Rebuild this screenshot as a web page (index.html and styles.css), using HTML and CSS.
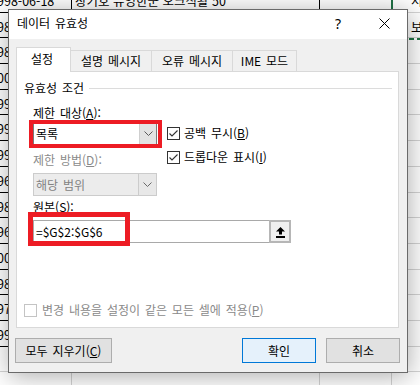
FILE: index.html
```html
<!DOCTYPE html>
<html lang="ko">
<head>
<meta charset="utf-8">
<title>데이터 유효성</title>
<link rel="stylesheet" href="styles.css">
</head>
<body>
<div class="sheet">
  <div class="row tbl"><div class="c a">998-06-18</div><div class="c b">장기호 뮤엉한군 오크식활 50</div><div class="c cc"></div><div class="c d">서</div></div>
  <div class="row tbl"><div class="c a">98-03-12</div><div class="c b"></div><div class="c cc"></div><div class="c d">보</div></div>
  <div class="row tbl"><div class="c a">98-11-02</div><div class="c b"></div><div class="c cc"></div><div class="c d"></div></div>
  <div class="row tbl"><div class="c a">00-05-21</div><div class="c b"></div><div class="c cc"></div><div class="c d"></div></div>
  <div class="row tbl"><div class="c a">99-01-15</div><div class="c b"></div><div class="c cc"></div><div class="c d"></div></div>
  <div class="row tbl"><div class="c a">99-07-30</div><div class="c b"></div><div class="c cc"></div><div class="c d"></div></div>
  <div class="row tbl"><div class="c a">99-09-09</div><div class="c b"></div><div class="c cc"></div><div class="c d"></div></div>
  <div class="row tbl"><div class="c a">96-02-27</div><div class="c b"></div><div class="c cc"></div><div class="c d"></div></div>
  <div class="row tbl"><div class="c a">98-12-04</div><div class="c b"></div><div class="c cc"></div><div class="c d"></div></div>
  <div class="row tbl"><div class="c a">96-04-18</div><div class="c b"></div><div class="c cc"></div><div class="c d"></div></div>
  <div class="row tbl"><div class="c a">00-10-01</div><div class="c b"></div><div class="c cc"></div><div class="c d"></div></div>
  <div class="row tbl"><div class="c a">98-08-23</div><div class="c b"></div><div class="c cc"></div><div class="c d"></div></div>
  <div class="row tbl"><div class="c a">97-06-06</div><div class="c b"></div><div class="c cc"></div><div class="c d"></div></div>
  <div class="row tbl"><div class="c a">99-03-14</div><div class="c b"></div><div class="c cc"></div><div class="c d"></div></div>
  <div class="row"><div class="c a"></div><div class="c b"></div><div class="c cc"></div><div class="c d"></div></div>
  <div class="row"><div class="c a"></div><div class="c b"></div><div class="c cc"></div><div class="c d"></div></div>
</div>
<div class="marquee"></div>

<div class="dialog">
  <div class="titlebar">
    <div class="title">데이터 유효성</div>
    <div class="tbtn help">?</div>
    <div class="tbtn close"><svg width="11" height="11" viewBox="0 0 11 11"><path d="M0.5 0.5 L10.5 10.5 M10.5 0.5 L0.5 10.5" stroke="#000" stroke-width="1" fill="none"/></svg></div>
  </div>
  <div class="body">
    <div class="tabs">
      <div class="tab active t1">설정</div>
      <div class="tab t2">설명 메시지</div>
      <div class="tab t3">오류 메시지</div>
      <div class="tab t4">IME 모드</div>
    </div>
    <div class="panel">
      <div class="grp"><span>유효성 조건</span><span class="rule"></span></div>
      <div class="section">
        <div class="top">
          <div class="leftcol">
            <div class="lbl l1">제한 대상(<u>A</u>):</div>
            <div class="combo hl1">
              <div class="val">목록</div>
              <div class="dd"><svg width="9" height="5" viewBox="0 0 9 5"><path d="M0.5 0.5 L4.5 4.5 L8.5 0.5" stroke="#5a5a5a" fill="none"/></svg></div>
            </div>
            <div class="lbl dis l2">제한 방법(<u>D</u>):</div>
            <div class="combo disabled">
              <div class="val">해당 범위</div>
              <div class="dd"><svg width="9" height="5" viewBox="0 0 9 5"><path d="M0.5 0.5 L4.5 4.5 L8.5 0.5" stroke="#6a6a6a" fill="none"/></svg></div>
            </div>
          </div>
          <div class="rightcol">
            <div class="check c1"><span class="box"><svg width="11" height="11" viewBox="0 0 11 11"><path d="M1.5 5.5 L4 8 L9.5 2.5" stroke="#333" stroke-width="1.1" fill="none"/></svg></span><span>공백 무시(<u>B</u>)</span></div>
            <div class="check c2"><span class="box"><svg width="11" height="11" viewBox="0 0 11 11"><path d="M1.5 5.5 L4 8 L9.5 2.5" stroke="#333" stroke-width="1.1" fill="none"/></svg></span><span>드롭다운 표시(<u>I</u>)</span></div>
          </div>
        </div>
        <div class="lbl l3">원본(<u>S</u>):</div>
        <div class="inrow">
          <div class="field hl2">=$G$2:$G$6</div>
          <div class="upbtn"><svg width="9" height="11" viewBox="0 0 9 11"><path d="M4.5 0 L9 4.5 L6 4.5 L6 7.5 L3 7.5 L3 4.5 L0 4.5 Z" fill="#000"/><rect x="0" y="9" width="9" height="2" fill="#000"/></svg></div>
        </div>
      </div>
      <div class="check dis bottomcheck"><span class="box"></span><span>변경 내용을 설정이 같은 모든 셀에 적용(<u>P</u>)</span></div>
    </div>
    <div class="btns">
      <div class="button clear">모두 지우기(<u>C</u>)</div>
      <div class="button ok">확인</div>
      <div class="button cancel">취소</div>
    </div>
  </div>
</div>
</body>
</html>
```
FILE: styles.css
```css
* { box-sizing: border-box; }
html, body { margin: 0; padding: 0; }
body {
  width: 420px;
  height: 385px;
  overflow: hidden;
  position: relative;
  background: #fff;
  font-family: "Noto Sans CJK KR", "Noto Sans", sans-serif;
  color: #000;
}

/* spreadsheet background */
.sheet { margin-top: -13px; font-size: 12.5px; }
.row { display: flex; height: 25.7px; }
.c {
  height: 100%;
  border-bottom: 1px solid #d4d4d4;
  border-right: 1px solid #d4d4d4;
  white-space: nowrap;
  overflow: hidden;
  line-height: 16px;
  padding-top: 6px;
}
.tbl .a, .tbl .b, .tbl .cc { border-color: #000; }
.a { width: 72px; text-indent: -3px; }
.b { width: 248px; padding-left: 3px; }
.cc { width: 72px; }
.d { flex: 1; border-right: none; padding-left: 19px; }

.marquee {
  position: absolute;
  left: 391px;
  top: -10px;
  width: 40px;
  height: 50px;
  border-left: 2px solid #217346;
}
.marquee::after {
  content: "";
  position: absolute;
  left: 0;
  right: 0;
  bottom: 0;
  height: 2px;
  background: repeating-linear-gradient(90deg, #217346 0 5px, transparent 5px 8px);
}

/* dialog */
.dialog {
  position: absolute;
  left: 8px;
  top: 9px;
  width: 400px;
  height: 364px;
  border: 1px solid #6a6a6a;
  background: #f0f0f0;
  box-shadow: 1px 3px 24px rgba(0, 0, 0, 0.33);
  display: flex;
  flex-direction: column;
  font-size: 12px;
  word-spacing: 1.5px;
  z-index: 2;
}
.titlebar {
  flex: none;
  height: 29px;
  background: #fff;
  display: flex;
  align-items: center;
  padding-left: 8px;
}
.title { flex: 1; line-height: 16px; margin-top: -3px; }
.tbtn {
  width: 46px;
  height: 29px;
  display: flex;
  align-items: center;
  justify-content: center;
  margin-top: -3px;
}
.help { font-family: "Noto Sans", sans-serif; font-size: 14px; }

.body {
  flex: 1;
  display: flex;
  flex-direction: column;
  padding: 8px 8px 9px 7px;
}
.tabs {
  display: flex;
  align-items: flex-end;
  height: 24px;
  position: relative;
  z-index: 1;
  flex: none;
}
.tab {
  height: 21px;
  border: 1px solid #d9d9d9;
  border-bottom: none;
  background: #f0f0f0;
  display: flex;
  align-items: center;
  justify-content: center;
  line-height: 16px;
  margin-left: -1px;
  padding-bottom: 1px;
}
.tab.active {
  height: 25px;
  margin-bottom: -1px;
  margin-left: 0;
  background: #fff;
  padding-bottom: 2px;
}
.t1 { width: 55px; padding-right: 3px; }
.t2 { width: 82px; }
.t3 { width: 82px; }
.t4 { width: 65px; }

.panel {
  flex: none;
  height: 257px;
  background: #fff;
  border: 1px solid #d9d9d9;
  display: flex;
  flex-direction: column;
  padding: 8px 6px 9px 7px;
}
.grp {
  display: flex;
  align-items: center;
  height: 16px;
  line-height: 16px;
}
.grp .rule {
  flex: 1;
  height: 1px;
  background: #dcdcdc;
  margin-left: 5px;
}
.section { padding-left: 9px; }
.top { display: flex; }
.leftcol { width: 124px; margin-right: 10px; }
.lbl { line-height: 16px; height: 16px; white-space: nowrap; }
.l1 { margin-top: 9px; }
.l2 { margin-top: 7px; }
.l3 { margin-top: 3px; }
.dis { color: #8a8a8a; }

.combo {
  height: 23px;
  border: 1px solid #7a7a7a;
  background: #fff;
  display: flex;
  margin-top: 1px;
}
.combo .val { flex: 1; padding-left: 2px; line-height: 21px; }
.combo .dd {
  width: 17px;
  display: flex;
  align-items: center;
  justify-content: center;
  background: #e3e3e3;
  border-left: 1px solid #cfcfcf;
}
.combo.disabled {
  margin-top: 5px;
  border-color: #cccccc;
  background: #ececec;
  color: #838383;
}
.combo.disabled .dd { width: 18px; background: #e8e8e8; border-left-color: #cccccc; }

.hl1, .hl2 { position: relative; }
.hl1::after {
  content: "";
  position: absolute;
  left: -5px;
  top: -3px;
  right: -6px;
  bottom: -4px;
  border: 4px solid #ed1c24;
}
.hl2::after {
  content: "";
  position: absolute;
  left: -6px;
  top: -9px;
  width: 92px;
  bottom: -4px;
  border: 5px solid #ed1c24;
}

.rightcol { padding-top: 29px; }
.check {
  display: flex;
  align-items: center;
  height: 16px;
  line-height: 16px;
  white-space: nowrap;
}
.check .box {
  width: 13px;
  height: 13px;
  border: 1px solid #333;
  background: #fff;
  margin-right: 4px;
  display: flex;
  align-items: center;
  justify-content: center;
  flex: none;
}
.c2 { margin-top: 8px; }
.bottomcheck { margin-top: auto; }
.bottomcheck .box { border-color: #c4c4c4; margin-right: 5px; }

.inrow { display: flex; margin-top: 5px; width: 258px; height: 23px; }
.field {
  flex: 1;
  border: 1px solid #a9a9a9;
  border-right: none;
  background: #fff;
  padding-left: 2px;
  line-height: 21px;
  white-space: nowrap;
}
.upbtn {
  width: 22px;
  border: 2px solid #b6b6b6;
  background: #efefef;
  display: flex;
  align-items: center;
  justify-content: center;
  padding-top: 1px;
}

.btns {
  display: flex;
  margin: 10px -1px 0 -1px;
  flex: none;
}
.button {
  height: 25px;
  border: 1px solid #adadad;
  background: #e1e1e1;
  display: flex;
  align-items: center;
  justify-content: center;
  line-height: 16px;
  white-space: nowrap;
}
.clear { width: 97px; }
.ok { width: 74px; margin-left: auto; border-color: #0078d7; background: #e5f1fb; }
.cancel { width: 74px; margin-left: 10px; }
```
